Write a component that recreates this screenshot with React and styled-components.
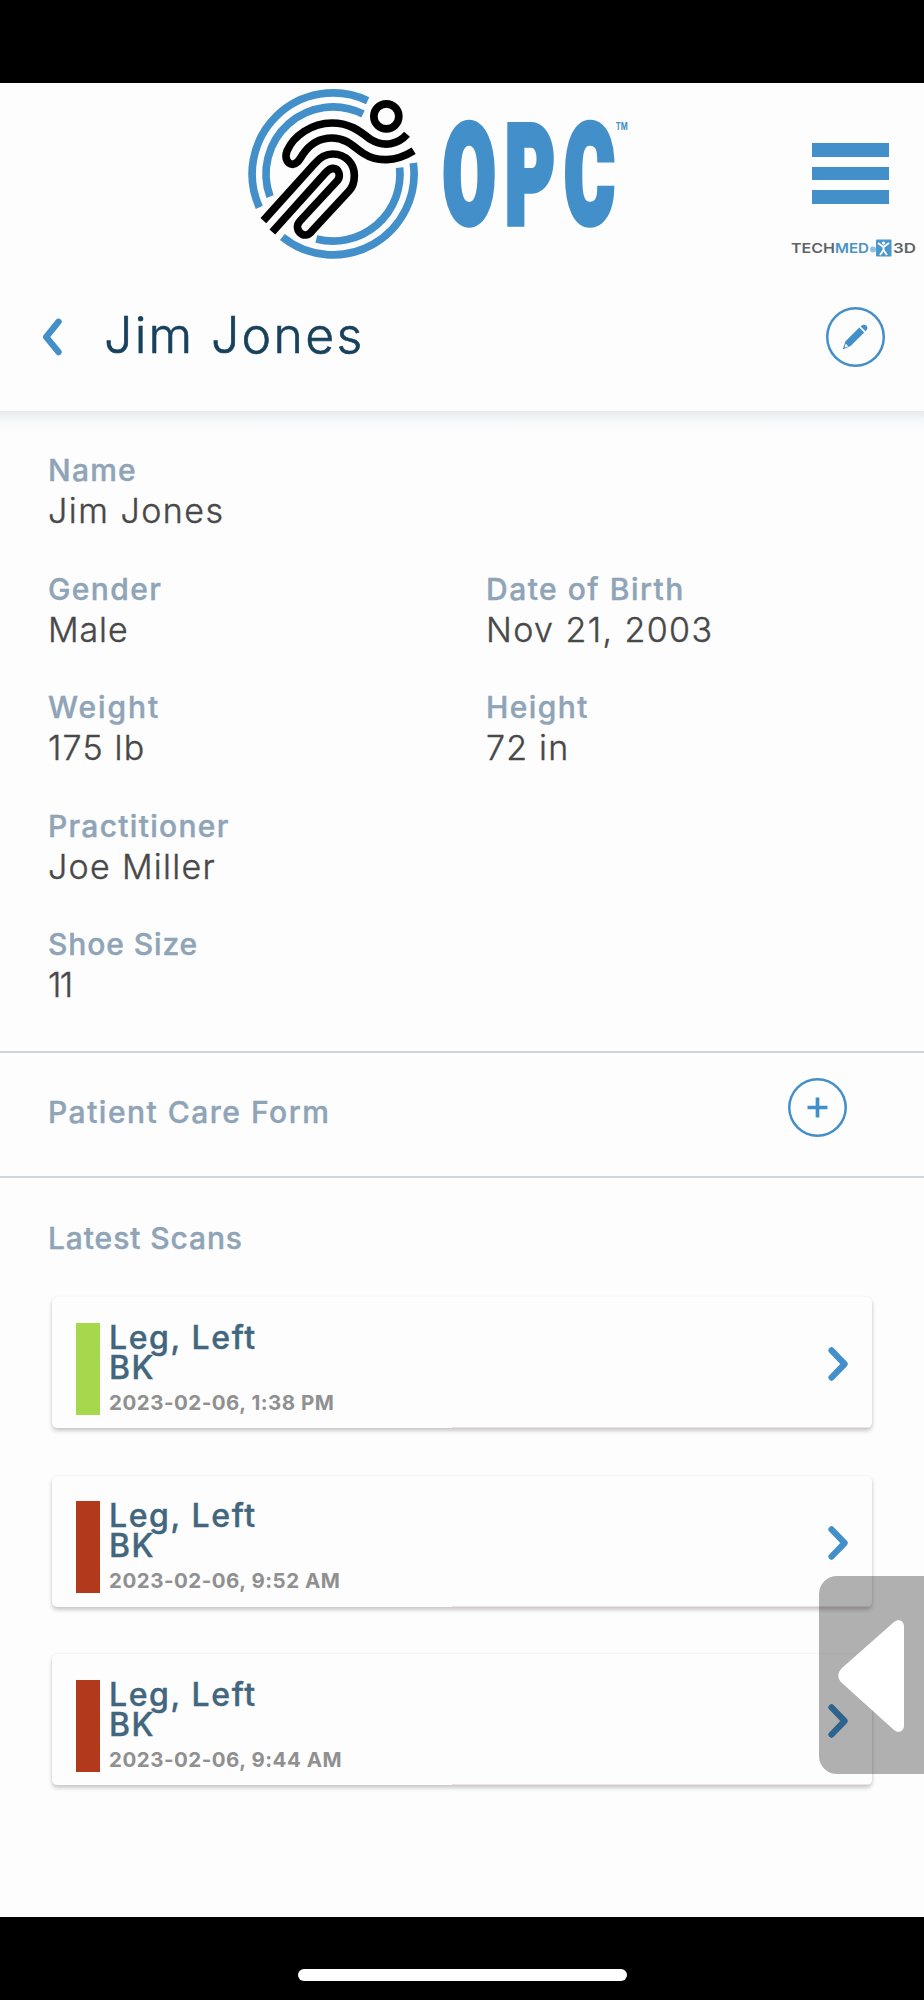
import React from 'react';
import styled, { createGlobalStyle } from 'styled-components';

const BLUE = '#428fca';

const patient = {
  name: 'Jim Jones',
  rows: [
    [{ label: 'Name', value: 'Jim Jones', ls: 1.2, vs: 1.5 }],
    [
      { label: 'Gender', value: 'Male', ls: 1.4, vs: 0.9 },
      { label: 'Date of Birth', value: 'Nov 21, 2003', ls: 1.5, vs: 1.4 }
    ],
    [
      { label: 'Weight', value: '175 lb', ls: 1.9, vs: 1.2 },
      { label: 'Height', value: '72 in', ls: 1.4, vs: 1.2 }
    ],
    [{ label: 'Practitioner', value: 'Joe Miller', ls: 1.3, vs: 1.3 }],
    [{ label: 'Shoe Size', value: '11', ls: 0.9, vs: -1.6 }]
  ]
};

const scans = [
  { id: 1, title: 'Leg, Left', type: 'BK', date: '2023-02-06, 1:38 PM', color: '#a5d84c' },
  { id: 2, title: 'Leg, Left', type: 'BK', date: '2023-02-06, 9:52 AM', color: '#b3391c' },
  { id: 3, title: 'Leg, Left', type: 'BK', date: '2023-02-06, 9:44 AM', color: '#b3391c' }
];

const OpcLogo = () => (
  <LogoSvg viewBox="0 39 1230 561" width="410" height="187">
    {/* rings */}
    <g fill="none" stroke={BLUE} strokeWidth="23">
      <path d="M88 412 A243 243 0 0 1 413 92" />
      <path d="M550 279 A243 243 0 0 1 157 501" />
      <path d="M120 380 A201 201 0 0 1 399 132" />
      <path d="M509 293 A201 201 0 0 1 259 507" />
    </g>
    {/* runner */}
    <g fill="none" stroke="#000" strokeWidth="23">
      <circle cx="469" cy="139" r="37.5" />
      <path d="M531 193 C505 223 462 233 421 208 C390 184 360 159 306 159 C245 159 190 198 171 243 C164 262 170 282 188 283 C203 282 209 268 218 254 C238 224 268 204 306 204 C350 204 370 230 400 250 C440 276 495 277 551 242" />
      <path d="M100 452 L255 280 C270 262 286 252 308 252 C348 252 373 282 373 317 C373 335 368 351 357 363 L246 483 C236 497 220 499 210 488 C200 478 200 464 210 453 L323 331 C333 318 327 294 308 295 C300 296 293 301 287 308 L127 486" />
    </g>
    <text
      transform="translate(0 459) scale(.55 1)"
      x="1162 1502 1825"
      fontFamily="Roboto, sans-serif"
      fontWeight="900"
      fontSize="413"
      fill={BLUE}
      stroke={BLUE}
      strokeWidth="6"
      vectorEffect="non-scaling-stroke"
      strokeLinejoin="miter"
    >
      OPC
    </text>
    <text x="1157" y="181" fontFamily="Inter, sans-serif" fontWeight="700" fontSize="29" textLength="36" lengthAdjust="spacingAndGlyphs" fill={BLUE}>
      TM
    </text>
  </LogoSvg>
);

const TechMedLogo = () => (
  <svg width="130" height="20" viewBox="0 0 130 20">
    <g fontFamily="Inter, sans-serif" fontSize="13.500" fontWeight="600">
      <text x="2" y="15" fill="#5d6468" textLength="44" lengthAdjust="spacingAndGlyphs">TECH</text>
      <text x="46" y="15" fill="#4a94c4" textLength="34" lengthAdjust="spacingAndGlyphs">MED</text>
      <text x="104" y="15" fill="#5d6468" textLength="23" lengthAdjust="spacingAndGlyphs">3D</text>
    </g>
    <circle cx="84" cy="11.500" r="3" fill="#8fc0e0" />
    <rect x="87" y="1.500" width="15.500" height="17" rx="1" fill="#4a97cb" />
    <path d="M89 5 L94.500 9 L100 5 M94.500 9 V12 L91 17 M94.500 12 L98 17" fill="none" stroke="#fff" strokeWidth="1.900" />
    <circle cx="94.500" cy="5" r="1.600" fill="#fff" />
  </svg>
);

const BackIcon = () => (
  <svg width="20" height="38" viewBox="0 0 20 38" fill="none" stroke={BLUE} strokeWidth="6.400">
    <path d="M16.500 3.800 L4.200 19 L16.500 34" strokeLinecap="round" strokeLinejoin="round" />
  </svg>
);

const PencilIcon = () => (
  <svg width="26" height="26" viewBox="0 0 26 26" fill={BLUE}>
    <path d="M17.300 3.600 L22.200 8.500 L8.600 22 L0.700 25.600 L3.500 17.300 Z" />
    <path d="M18.700 2.500 C20.300 0.500 22.500 0.100 24.300 1.500 C26 3.200 25.900 5.400 23.500 7.300 Z" />
    <path d="M3.800 19.800 L6.200 22.200 L3.500 23.500 L2.700 22.800 Z" fill="#fdfdfd" />
  </svg>
);

const NextIcon = () => (
  <svg width="20" height="34" viewBox="0 0 20 34" fill="none" stroke={BLUE} strokeWidth="6.200">
    <path d="M3.500 3.400 L16.600 17 L3.500 30.600" strokeLinecap="round" strokeLinejoin="round" />
  </svg>
);

const Field = ({ label, value, ls, vs }) => (
  <div>
    <Label $spacing={ls}>{label}</Label>
    <Value $spacing={vs}>{value}</Value>
  </div>
);

const App = () => (
  <>
    <GlobalStyle />
    <Screen>
      <StatusArea />
      <Page>
        <Header>
          <Brand>
            <OpcLogo />
            <MenuColumn>
              <Menu>
                <span />
                <span />
                <span />
              </Menu>
              <TechMedLogo />
            </MenuColumn>
          </Brand>
          <TitleBar>
            <BackIcon />
            <Title>{patient.name}</Title>
            <RoundButton>
              <PencilIcon />
            </RoundButton>
          </TitleBar>
        </Header>

        <Details>
          {patient.rows.map((row, i) => (
            <DetailRow key={i}>
              {row.map(field => <Field key={field.label} {...field} />)}
            </DetailRow>
          ))}
        </Details>

        <FormSection>
          <Label $spacing={1.5}>Patient Care Form</Label>
          <RoundButton>
            <svg width="21" height="21" viewBox="0 0 21 21" stroke={BLUE} strokeWidth="3.700">
              <path d="M10.500 0.500 V20.500 M0.500 10.500 H20.500" />
            </svg>
          </RoundButton>
        </FormSection>

        <ScansSection>
          <Label $spacing={0.9}>Latest Scans</Label>
          <ScanList>
            {scans.map(scan => (
              <ScanCard key={scan.id}>
                <Status $color={scan.color} />
                <ScanInfo>
                  <ScanTitle>{scan.title}</ScanTitle>
                  <ScanTitle>{scan.type}</ScanTitle>
                  <ScanDate>{scan.date}</ScanDate>
                </ScanInfo>
                <NextIcon />
              </ScanCard>
            ))}
          </ScanList>
        </ScansSection>
      </Page>
      <HomeArea>
        <HomeIndicator />
      </HomeArea>
      <SideHandle>
        <svg width="68" height="114" viewBox="0 0 68 114" fill="#fff">
          <path d="M56 3 C61 -1 66 2 66 8 V106 C66 112 61 115 56 111 L4 64 C-1 59 -1 54 4 49 Z" />
        </svg>
      </SideHandle>
    </Screen>
  </>
);

export default App;

// --- styles ---

const GlobalStyle = createGlobalStyle`
  * { box-sizing: border-box; }
  body {
    margin: 0;
    background: #000;
    font-family: Inter, "Liberation Sans", sans-serif;
  }
  svg { display: block; flex-shrink: 0; }
`;

const Screen = styled.div`
  position: relative;
  width: 924px;
  height: 2000px;
  display: flex;
  flex-direction: column;
  overflow: hidden;
`;

const StatusArea = styled.div`
  height: 83px;
  background: #000;
`;

const Page = styled.main`
  height: 1833.5px;
  background: #fdfdfd;
`;

const Header = styled.header`
  height: 328px;
`;

const Brand = styled.div`
  display: flex;
  justify-content: space-between;
  height: 187px;
  padding-left: 230px;
`;

const LogoSvg = styled.svg`
  overflow: visible;
`;

const MenuColumn = styled.div`
  display: flex;
  flex-direction: column;
  align-items: flex-end;
  justify-content: space-between;
  padding: 60px 5px 12px 0;
`;

const Menu = styled.div`
  width: 77px;
  margin-right: 30px;
  display: flex;
  flex-direction: column;
  gap: 10px;

  span {
    height: 13.6px;
    background: ${BLUE};
  }
`;

const TitleBar = styled.div`
  display: flex;
  align-items: center;
  height: 134px;
  padding: 0 39px 0 42px;
`;

const Title = styled.h1`
  flex: 1;
  margin: -4px 0 0 42px;
  font-size: 50px;
  line-height: 60px;
  font-weight: 300;
  letter-spacing: 2.3px;
  color: #17415c;
  -webkit-text-stroke: 0.6px #17415c;
`;

const RoundButton = styled.button`
  display: flex;
  align-items: center;
  justify-content: center;
  width: 59.500px;
  height: 59.500px;
  padding: 0;
  border: none;
  border-radius: 50%;
  box-shadow: inset 0 0 0 2.5px ${BLUE};
  background: transparent;
`;

const Label = styled.div`
  font-size: 30px;
  line-height: 40px;
  font-weight: 500;
  letter-spacing: ${props => props.$spacing}px;
  color: #8fa4b7;
  -webkit-text-stroke: 0.4px #8fa4b7;
`;

const Value = styled.div`
  font-size: 34px;
  line-height: 42px;
  font-weight: 300;
  letter-spacing: ${props => props.$spacing}px;
  color: #484848;
  -webkit-text-stroke: 0.4px #484848;
`;

const Details = styled.section`
  display: flex;
  flex-direction: column;
  gap: 36.5px;
  height: 642px;
  padding: 39px 48px 0;
  background: linear-gradient(#e6eaee 0, #f5f8f9 10px, #fdfdfd 20px);
  border-bottom: 2px solid #cbd6df;
`;

const DetailRow = styled.div`
  display: grid;
  grid-template-columns: 438px 1fr;
`;

const FormSection = styled.section`
  display: flex;
  justify-content: space-between;
  height: 125px;
  padding: 24.5px 77px 0 48px;
  border-bottom: 2px solid #cbd6df;

  ${Label} {
    margin-top: 14.5px;
  }
`;

const ScansSection = styled.section`
  padding: 40px 52px 0;

  > ${Label} {
    margin-left: -4px;
  }
`;

const ScanList = styled.div`
  display: flex;
  flex-direction: column;
  gap: 47.5px;
  margin-top: 39px;
`;

const ScanCard = styled.article`
  display: flex;
  align-items: center;
  height: 131px;
  padding: 3px 24px 0 24px;
  border-radius: 5px;
  background: linear-gradient(#f3dfdf, #f3dfdf) 400px 100% / 416px 1px no-repeat #fdfdfd;
  box-shadow: 0 3px 4px rgba(0, 0, 0, 0.2), 0 0 3px rgba(0, 0, 0, 0.06);
`;

const Status = styled.div`
  width: 24px;
  height: 92px;
  margin-top: 9px;
  background: ${props => props.$color};
`;

const ScanInfo = styled.div`
  flex: 1;
  margin: 11px 0 0 9px;
`;

const ScanTitle = styled.div`
  font-size: 32px;
  line-height: 30px;
  font-weight: 500;
  letter-spacing: 1.6px;
  color: #41667d;
  -webkit-text-stroke: 0.4px #41667d;
`;

const ScanDate = styled.div`
  margin-top: 6px;
  font-size: 20.500px;
  line-height: 28px;
  font-weight: 700;
  letter-spacing: 0.5px;
  color: #909090;
`;

const HomeArea = styled.div`
  display: flex;
  justify-content: center;
  height: 83.5px;
  padding-top: 52.5px;
  background: #000;
`;

const HomeIndicator = styled.div`
  width: 329px;
  height: 12px;
  border-radius: 6px;
  background: #fff;
`;

const SideHandle = styled.div`
  position: absolute;
  top: 1576px;
  right: 0;
  width: 105.500px;
  height: 198px;
  display: flex;
  align-items: center;
  padding: 1px 0 0 19px;
  border-radius: 18px 0 0 18px;
  background: rgba(0, 0, 0, 0.3);
`;
